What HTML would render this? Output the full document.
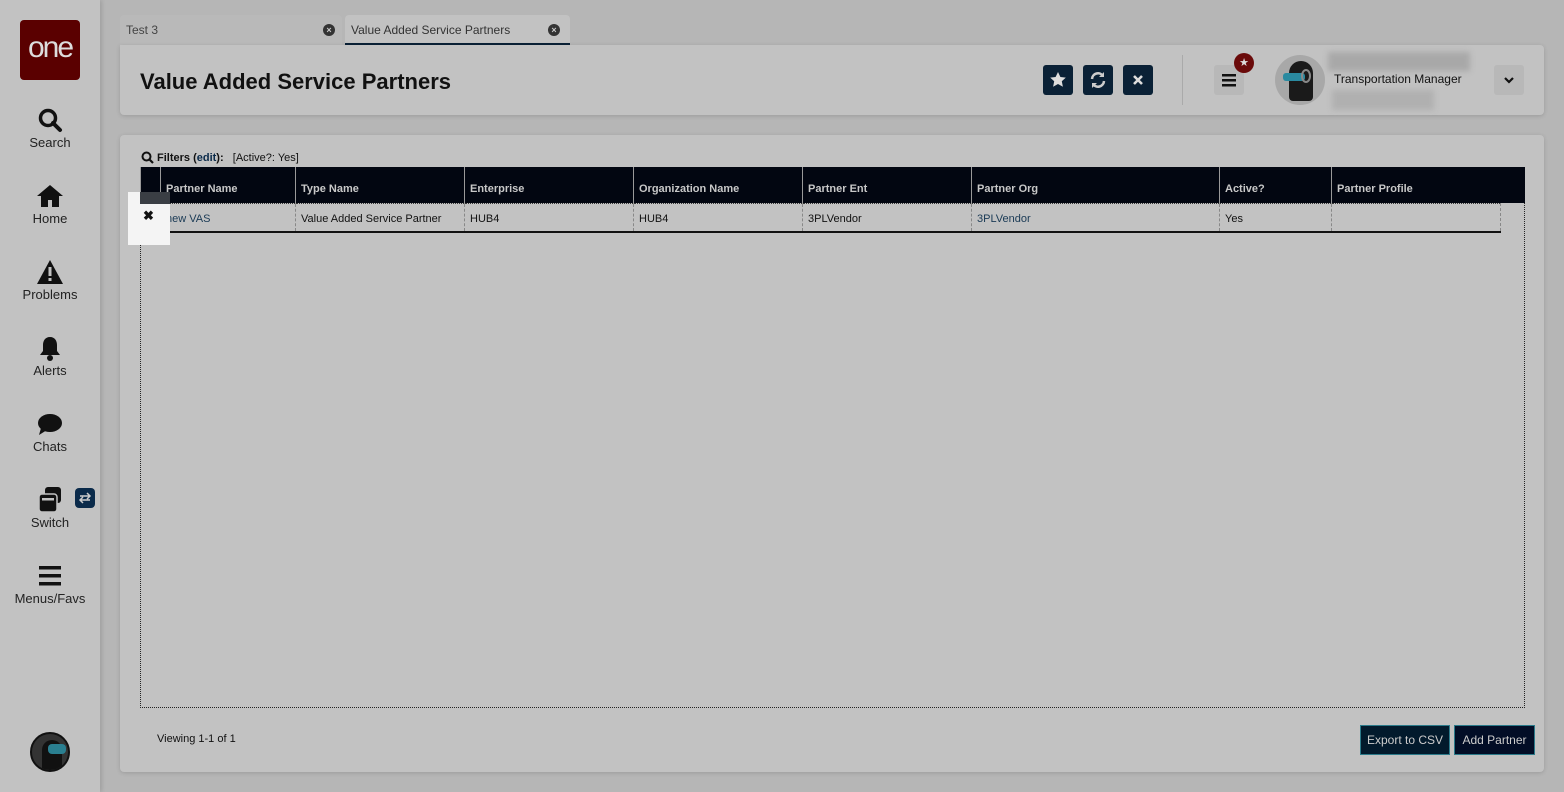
<!DOCTYPE html>
<html><head><style>
*{box-sizing:border-box;margin:0;padding:0}
body{width:1564px;height:792px;background:#b6b6b6;font-family:"Liberation Sans",sans-serif;position:relative;overflow:hidden;color:#111}
.side{position:absolute;left:0;top:0;width:100px;height:792px;background:#c2c2c2;box-shadow:2px 0 4px rgba(0,0,0,.12)}
.logo{position:absolute;left:20px;top:20px;width:60px;height:60px;background:#5a0000;border-radius:4px;color:#ddd;font-size:30px;text-align:center;line-height:56px;letter-spacing:-2px}
.nav{position:absolute;left:0;width:100px;text-align:center;font-size:13px;color:#222}
.nav svg{display:block;margin:0 auto 2px}
.abs{position:absolute}
.tab{position:absolute;top:15px;height:30px;border-radius:4px 4px 0 0;font-size:12px;line-height:30px;padding-left:6px;color:#333}
.x{position:absolute;top:9px;width:12px;height:12px;border-radius:50%;background:#333;color:#ccc;font-size:9px;line-height:12px;text-align:center;font-weight:bold}
.panel{position:absolute;background:#c2c2c2;border-radius:4px;box-shadow:0 1px 4px rgba(0,0,0,.15)}
.btn{position:absolute;top:65px;width:30px;height:30px;background:#0a2136;border-radius:3px}
table{border-collapse:collapse;position:absolute;left:140px;top:167px;font-size:11px}
th{background:#020611;color:#c8c8c8;height:36px;text-align:left;padding:8px 5px 0;border-left:1px solid #999;font-weight:bold}
td{height:29px;padding:3px 5px 0;border-left:1px dashed #888;border-bottom:2px solid #111;border-top:1px dotted #333}
</style></head><body>
<div class="side">
 <div class="logo">one</div>
 <div class="nav" style="top:107px"><svg width="26" height="26" viewBox="0 0 26 26"><circle cx="11" cy="11" r="7.5" fill="none" stroke="#111" stroke-width="3.5"/><path d="M16 16l7 7" stroke="#111" stroke-width="4" stroke-linecap="round"/></svg>Search</div>
 <div class="nav" style="top:183px"><svg width="28" height="26" viewBox="0 0 28 26"><path d="M14 2L1 13h4v11h7v-7h4v7h7V13h4z" fill="#111"/></svg>Home</div>
 <div class="nav" style="top:259px"><svg width="28" height="26" viewBox="0 0 28 26"><path d="M14 1L1 25h26z" fill="#111"/><rect x="12.5" y="8" width="3" height="9" fill="#c2c2c2"/><rect x="12.5" y="19" width="3" height="3" fill="#c2c2c2"/></svg>Problems</div>
 <div class="nav" style="top:335px"><svg width="26" height="26" viewBox="0 0 26 26"><path d="M13 2c-5 0-7 4-7 8v6l-3 4h20l-3-4v-6c0-4-2-8-7-8z" fill="#111"/><circle cx="13" cy="23" r="3" fill="#111"/></svg>Alerts</div>
 <div class="nav" style="top:411px"><svg width="28" height="26" viewBox="0 0 28 26"><ellipse cx="14" cy="12" rx="12" ry="9" fill="#111"/><path d="M5 17l-2 7 8-5z" fill="#111"/></svg>Chats</div>
 <div class="nav" style="top:487px"><svg width="28" height="26" viewBox="0 0 28 26"><rect x="9" y="0" width="16" height="16" rx="3" fill="#111"/><rect x="3" y="7" width="18" height="18" rx="3" fill="#111" stroke="#c2c2c2" stroke-width="1.5"/><rect x="6" y="11" width="12" height="2.5" fill="#c2c2c2"/></svg>Switch</div>
 <div class="abs" style="left:75px;top:488px;width:20px;height:20px;background:#0a2a4a;border-radius:4px"><svg width="20" height="20"><path d="M5 8h10M12 5l3 3-3 3M15 12H5M8 9l-3 3 3 3" stroke="#ccc" stroke-width="1.5" fill="none"/></svg></div>
 <div class="nav" style="top:563px"><svg width="26" height="26" viewBox="0 0 26 26"><rect x="2" y="3" width="22" height="3.5" fill="#111"/><rect x="2" y="11" width="22" height="3.5" fill="#111"/><rect x="2" y="19" width="22" height="3.5" fill="#111"/></svg>Menus/Favs</div>
 <div class="abs" style="left:30px;top:732px;width:40px;height:40px;border-radius:50%;background:#333;border:2px solid #111;overflow:hidden"><div class="abs" style="left:10px;top:6px;width:20px;height:30px;background:#111;border-radius:10px 10px 2px 2px"></div><div class="abs" style="left:16px;top:10px;width:18px;height:10px;background:#2a7f90;border-radius:4px"></div></div>
</div>
<div class="tab" style="left:120px;width:222px;background:#b9b9b9;color:#444">Test 3<div class="x" style="left:203px">×</div></div>
<div class="tab" style="left:345px;width:225px;background:#c2c2c2;border-bottom:2px solid #0a2136">Value Added Service Partners<div class="x" style="left:203px">×</div></div>
<div class="panel" style="left:120px;top:45px;width:1424px;height:70px;border-radius:0 4px 4px 4px">
 <div class="abs" style="left:20px;top:24px;font-size:22px;font-weight:bold;color:#111">Value Added Service Partners</div>
 <div class="abs" style="left:1062px;top:10px;width:1px;height:50px;background:#aaa"></div>
 <div class="abs" style="left:1094px;top:20px;width:30px;height:30px;background:#b8b8b8;border-radius:3px"><svg width="30" height="30"><rect x="8" y="9" width="14" height="2.5" fill="#111"/><rect x="8" y="14" width="14" height="2.5" fill="#111"/><rect x="8" y="19" width="14" height="2.5" fill="#111"/></svg></div>
 <div class="abs" style="left:1114px;top:8px;width:20px;height:20px;border-radius:50%;background:#6a0a0a;color:#ddd;font-size:11px;text-align:center;line-height:20px">★</div>
 <div class="abs" style="left:1155px;top:10px;width:50px;height:50px;border-radius:50%;background:#a8a8a8;overflow:hidden"><div class="abs" style="left:14px;top:6px;width:24px;height:40px;background:#1a1a1a;border-radius:12px 12px 4px 4px"></div><div class="abs" style="left:8px;top:18px;width:22px;height:8px;background:#2a8aa0;border-radius:3px"></div><div class="abs" style="left:26px;top:14px;width:10px;height:14px;border-radius:50%;border:2px solid #888"></div></div>
 <div class="abs" style="left:1208px;top:7px;width:142px;height:19px;background:#a8a8a8;filter:blur(3px)"></div>
 <div class="abs" style="left:1214px;top:27px;font-size:12px;color:#111">Transportation Manager</div>
 <div class="abs" style="left:1212px;top:45px;width:102px;height:20px;background:#b0b0b0;filter:blur(3px)"></div>
 <div class="abs" style="left:1374px;top:20px;width:30px;height:30px;background:#b8b8b8;border-radius:3px"><svg width="30" height="30"><path d="M11 13l4 4 4-4" stroke="#111" stroke-width="2.2" fill="none"/></svg></div>
</div>
<div class="btn" style="left:1043px"><svg width="30" height="30"><path d="M15 7l2.4 5 5.4.6-4 3.7 1.1 5.4L15 19l-4.9 2.7 1.1-5.4-4-3.7 5.4-.6z" fill="#ddd"/></svg></div>
<div class="btn" style="left:1083px"><svg width="30" height="30"><path d="M9 14a6 6 0 0 1 11-3" stroke="#ccc" stroke-width="2.5" fill="none"/><path d="M21 7v5h-5z" fill="#ccc"/><path d="M21 16a6 6 0 0 1-11 3" stroke="#ccc" stroke-width="2.5" fill="none"/><path d="M9 23v-5h5z" fill="#ccc"/></svg></div>
<div class="btn" style="left:1123px"><svg width="30" height="30"><path d="M11 11l8 8M19 11l-8 8" stroke="#ddd" stroke-width="2.6"/></svg></div>
<div class="panel" style="left:120px;top:135px;width:1424px;height:637px"></div>
<svg class="abs" style="left:141px;top:151px" width="13" height="13"><circle cx="5.5" cy="5.5" r="4" fill="none" stroke="#111" stroke-width="2"/><path d="M8.5 8.5l3.5 3.5" stroke="#111" stroke-width="2.2"/></svg>
<div class="abs" style="left:157px;top:152px;font-size:11px"><b>Filters (<span style="color:#0a2a4a">edit</span>):</b> &nbsp; [Active?: Yes]</div>
<div class="abs" style="left:140px;top:203px;width:1385px;height:505px;border:1px dotted #222;border-top:none"></div>
<div class="abs" style="left:1500px;top:167px;width:25px;height:36px;background:#020611"></div>
<table>
<tr><th style="width:20px;padding:0"></th><th style="width:135px">Partner Name</th><th style="width:169px">Type Name</th><th style="width:169px">Enterprise</th><th style="width:169px">Organization Name</th><th style="width:169px">Partner Ent</th><th style="width:248px">Partner Org</th><th style="width:112px">Active?</th><th style="width:169px">Partner Profile</th></tr>
<tr><td style="border-left:none"></td><td style="color:#1a3a55">new VAS</td><td>Value Added Service Partner</td><td>HUB4</td><td>HUB4</td><td>3PLVendor</td><td style="color:#1a3a55">3PLVendor</td><td>Yes</td><td style="border-right:1px dashed #888"></td></tr>
</table>
<div class="abs" style="left:128px;top:192px;width:42px;height:53px;background:#f4f4f4"><div class="abs" style="left:12px;top:0;width:30px;height:12px;background:#3a3e44"></div><div class="abs" style="left:15px;top:16px;font-size:13px;font-weight:bold">✖︎</div></div>
<div class="abs" style="left:157px;top:733px;font-size:11px">Viewing 1-1 of 1</div>
<div class="abs" style="left:1360px;top:725px;width:90px;height:30px;background:#021a2c;border:1px solid #2a7a8a;color:#ccc;font-size:12px;text-align:center;line-height:28px">Export to CSV</div>
<div class="abs" style="left:1454px;top:725px;width:81px;height:30px;background:#020d26;border:1px solid #2a7a8a;color:#ccc;font-size:12px;text-align:center;line-height:28px">Add Partner</div>
</body></html>
